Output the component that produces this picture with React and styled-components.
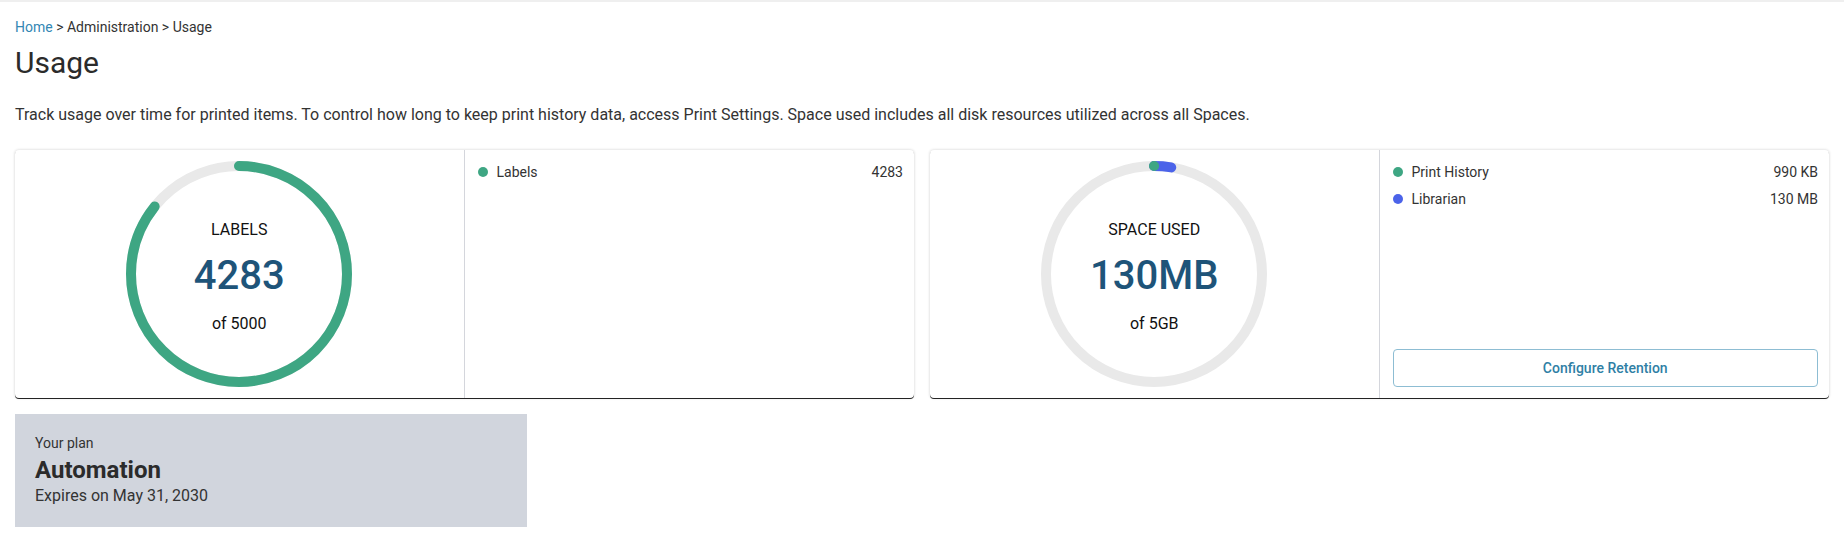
import styled, { createGlobalStyle } from "styled-components";

const GlobalStyle = createGlobalStyle`
  html, body { margin: 0; padding: 0; background: #fff; }
  body {
    font-family: Roboto, "Liberation Sans", Arial, sans-serif;
    color: #333;
    border-top: 2px solid #efefef;
  }
`;

const R = 108;
const CIRC = 2 * Math.PI * R;

// each segment: fraction of the whole ring + colour; drawn clockwise from 12 o'clock
const Donut = ({ segments, title, value, total }) => {
  let offset = 0;
  const arcs = segments.map((s) => {
    const arc = { ...s, start: offset };
    offset += s.fraction * CIRC;
    return arc;
  });
  return (
    <Ring>
      <svg width="226" height="226" viewBox="0 0 226 226">
        <circle cx="113" cy="113" r={R} fill="none" stroke="#e9e9e9" strokeWidth="10" />
        {[...arcs].reverse().map((a) => (
          <circle
            key={a.color}
            cx="113"
            cy="113"
            r={R}
            fill="none"
            stroke={a.color}
            strokeWidth="10"
            strokeLinecap="round"
            strokeDasharray={`${Math.max(a.fraction * CIRC, 0.01)} ${CIRC}`}
            strokeDashoffset={-a.start}
            transform="rotate(-90 113 113)"
          />
        ))}
      </svg>
      <RingText>
        <RingTitle>{title}</RingTitle>
        <RingValue>{value}</RingValue>
        <RingTotal>{total}</RingTotal>
      </RingText>
    </Ring>
  );
};

const UsageCard = ({ donut, legend, action }) => (
  <Card>
    <ChartPane>
      <Donut {...donut} />
    </ChartPane>
    <LegendPane>
      <LegendList>
        {legend.map((row) => (
          <LegendRow key={row.label}>
            <Dot $color={row.color} />
            <LegendLabel>{row.label}</LegendLabel>
            <LegendValue>{row.value}</LegendValue>
          </LegendRow>
        ))}
      </LegendList>
      {action && <OutlineButton type="button">{action}</OutlineButton>}
    </LegendPane>
  </Card>
);

const GREEN = "#3ea683";
const BLUE = "#4b63e9";

export default function App() {
  return (
    <>
      <GlobalStyle />
      <Page>
        <Breadcrumb>
          <Crumb href="#">Home</Crumb> &gt; Administration &gt; Usage
        </Breadcrumb>
        <Title>Usage</Title>
        <Lead>
          Track usage over time for printed items. To control how long to keep print history data, access Print
          Settings. Space used includes all disk resources utilized across all Spaces.
        </Lead>
        <Cards>
          <UsageCard
            donut={{
              segments: [{ fraction: 4283 / 5000, color: GREEN }],
              title: "LABELS",
              value: "4283",
              total: "of 5000",
            }}
            legend={[{ label: "Labels", value: "4283", color: GREEN }]}
          />
          <UsageCard
            donut={{
              segments: [
                { fraction: 0.99 / 5120, color: GREEN },
                { fraction: 130 / 5120, color: BLUE },
              ],
              title: "SPACE USED",
              value: "130MB",
              total: "of 5GB",
            }}
            legend={[
              { label: "Print History", value: "990 KB", color: GREEN },
              { label: "Librarian", value: "130 MB", color: BLUE },
            ]}
            action="Configure Retention"
          />
        </Cards>
        <Plan>
          <PlanLabel>Your plan</PlanLabel>
          <PlanName>Automation</PlanName>
          <PlanExpiry>Expires on May 31, 2030</PlanExpiry>
        </Plan>
      </Page>
    </>
  );
}

const Page = styled.div`
  padding: 15px 15px 0;
`;

const Breadcrumb = styled.div`
  font-size: 14px;
  line-height: 20px;
  color: #333;
`;

const Crumb = styled.a`
  color: #3387b4;
  text-decoration: none;
`;

const Title = styled.h1`
  margin: 8px 0 0;
  font-size: 30px;
  font-weight: 400;
  line-height: 36px;
  color: #2b2b2b;
`;

const Lead = styled.p`
  margin: 23px 0 0;
  font-size: 16px;
  line-height: 22px;
  color: #333;
`;

const Cards = styled.div`
  display: grid;
  grid-template-columns: 1fr 1fr;
  gap: 16px;
  margin-top: 24px;
`;

const Card = styled.div`
  display: grid;
  grid-template-columns: 1fr 1fr;
  height: 248px;
  background: #fff;
  border-radius: 4px;
  box-shadow: 0 1px 0 rgba(0, 0, 0, 0.85), 0 0 3px rgba(0, 0, 0, 0.2);
`;

const ChartPane = styled.div`
  display: flex;
  align-items: center;
  justify-content: center;
  border-right: 1px solid #d4d6dc;
`;

const Ring = styled.div`
  display: grid;
  width: 226px;
  height: 226px;
  & > * { grid-area: 1 / 1; }
`;

const RingText = styled.div`
  display: flex;
  flex-direction: column;
  align-items: center;
  justify-content: center;
  padding-top: 6px;
  color: #111;
`;

const RingTitle = styled.div`
  font-size: 16px;
  line-height: 20px;
`;

const RingValue = styled.div`
  margin: 13px 0 15px;
  font-size: 40px;
  line-height: 46px;
  font-weight: 500;
  color: #1e5479;
`;

const RingTotal = styled.div`
  font-size: 16px;
  line-height: 20px;
`;

const LegendPane = styled.div`
  display: flex;
  flex-direction: column;
  justify-content: space-between;
  padding: 12px 11px 11px 13px;
`;

const LegendList = styled.div`
  display: flex;
  flex-direction: column;
  gap: 7px;
`;

const LegendRow = styled.div`
  display: flex;
  align-items: center;
  font-size: 14px;
  line-height: 20px;
  color: #333;
`;

const Dot = styled.span`
  width: 10px;
  height: 10px;
  border-radius: 50%;
  background: ${(p) => p.$color};
  margin-right: 9px;
`;

const LegendLabel = styled.span`
  flex: 1;
`;

const LegendValue = styled.span``;

const OutlineButton = styled.button`
  height: 38px;
  width: 100%;
  background: #fff;
  border: 1px solid #8dbdd3;
  border-radius: 4px;
  font-family: inherit;
  font-size: 14px;
  font-weight: 500;
  color: #2f7fa5;
  cursor: pointer;
`;

const Plan = styled.div`
  width: 512px;
  height: 113px;
  box-sizing: border-box;
  margin-top: 16px;
  padding: 19px 20px 0;
  background: #d1d5dd;
  color: #333;
`;

const PlanLabel = styled.div`
  font-size: 14px;
  line-height: 20px;
`;

const PlanName = styled.div`
  margin-top: 3px;
  font-size: 24px;
  line-height: 28px;
  font-weight: 700;
  color: #2b2b2b;
`;

const PlanExpiry = styled.div`
  margin-top: 1px;
  font-size: 16px;
  line-height: 22px;
`;
